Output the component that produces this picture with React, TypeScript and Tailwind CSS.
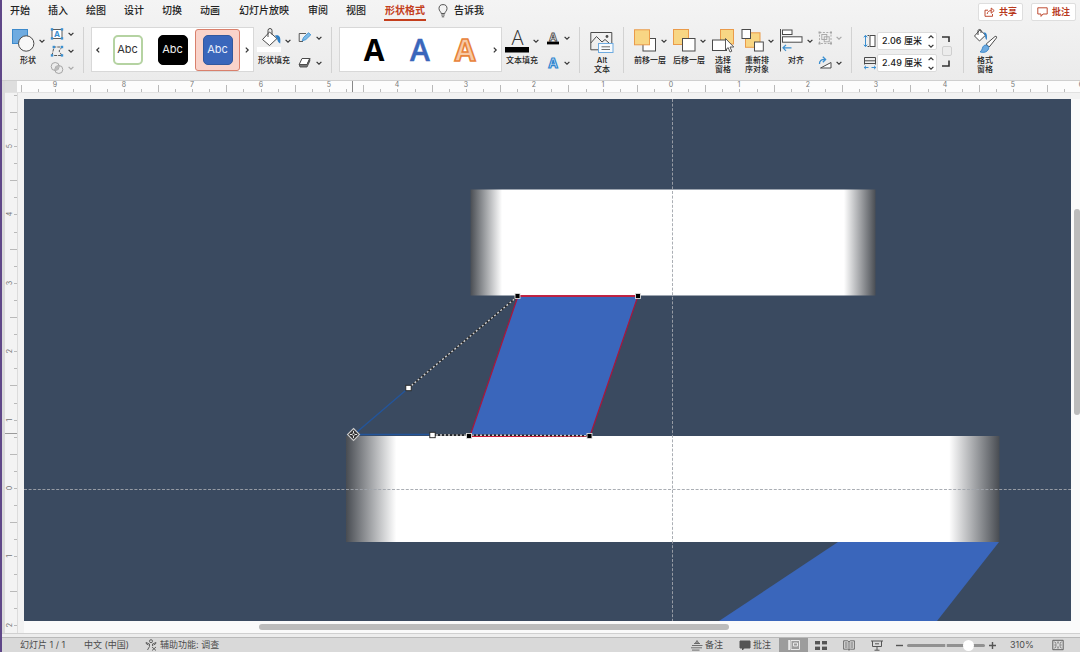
import React from "react";

const INK = "#4a4a4a";
const BLUE = "#3b8fd0";

const TABS = [
  { name: "开始", width: "w-5" },
  { name: "插入", width: "w-5" },
  { name: "绘图", width: "w-5" },
  { name: "设计", width: "w-5" },
  { name: "切换", width: "w-5" },
  { name: "动画", width: "w-5" },
  { name: "幻灯片放映", width: "w-[52px]" },
  { name: "审阅", width: "w-5" },
  { name: "视图", width: "w-5" },
  { name: "形状格式", width: "w-[42px]", active: true },
];

function Chevron({ dir = "down", muted = false }: { dir?: "down" | "up" | "left" | "right"; muted?: boolean }) {
  const d = {
    down: "M.6 1.8 L3 4.2 L5.4 1.8",
    up: "M.6 4.2 L3 1.8 L5.4 4.2",
    left: "M4.2 .6 L1.8 3 L4.2 5.4",
    right: "M1.8 .6 L4.2 3 L1.8 5.4",
  }[dir];
  return (
    <svg viewBox="0 0 6 6" className="size-[6px] shrink-0" fill="none" stroke={muted ? "#a8a8a8" : "#333"} strokeWidth="1.2" aria-hidden="true">
      <path d={d} />
    </svg>
  );
}

function Tool({ label, menu = false, children }: { label: string[]; menu?: boolean; children: React.ReactNode }) {
  return (
    <button className={`flex flex-col items-center ${menu ? "w-[34px]" : "w-6"}`}>
      <span className="flex h-[29px] items-start gap-1">
        <svg viewBox="0 0 24 28" className="h-7 w-6 shrink-0 overflow-visible" fill="none" aria-hidden="true">
          {children}
        </svg>
        {menu && (
          <span className="pt-[11px]">
            <Chevron />
          </span>
        )}
      </span>
      {label.map((line) => (
        <span key={line} className="whitespace-nowrap text-[8px] leading-[9px] font-medium">
          {line}
        </span>
      ))}
    </button>
  );
}

function SmallTool({ label, muted = false, children }: { label: string; muted?: boolean; children: React.ReactNode }) {
  return (
    <button aria-label={label} disabled={muted} className="flex h-[14px] items-center gap-[3px]">
      <svg viewBox="0 0 15 14" className="h-[14px] w-[15px] overflow-visible" fill="none" aria-hidden="true">
        {children}
      </svg>
      <Chevron muted={muted} />
    </button>
  );
}

function Group({ className = "px-[9px]", last = false, children }: { className?: string; last?: boolean; children: React.ReactNode }) {
  return (
    <div className={`flex h-[46px] shrink-0 items-start ${last ? "" : "border-r border-[#d2d2d2]"} ${className}`}>{children}</div>
  );
}

function Swatch({ tone, selected = false }: { tone: string; selected?: boolean }) {
  return (
    <button
      className={`flex h-[42px] w-[45px] items-center justify-center rounded-[3px] border ${
        selected ? "border-[#d9806c] bg-[#f9d3ca]" : "border-transparent"
      }`}
    >
      <span className={`flex size-[30px] items-center justify-center rounded-[5px] border pb-[2px] text-[11px] leading-3 ${tone}`}>Abc</span>
    </button>
  );
}

function Measure({ name, value, icon }: { name: string; value: string; icon: React.ReactNode }) {
  return (
    <div className="flex h-[18px] items-center">
      <svg viewBox="0 0 14 14" className="size-[14px]" fill="none" aria-hidden="true">
        {icon}
      </svg>
      <div className="flex h-[18px] w-[60px] items-center rounded-[2px] border border-[#dcdcdc] bg-white pl-1">
        <input aria-label={name} defaultValue={value} className="w-[46px] bg-transparent text-[9px] leading-3 font-medium text-[#222] outline-none" />
        <span className="flex flex-col gap-[3px]">
          <button aria-label={`增加${name}`} className="block">
            <Chevron dir="up" />
          </button>
          <button aria-label={`减少${name}`} className="block">
            <Chevron />
          </button>
        </span>
      </div>
    </div>
  );
}

function Bucket() {
  return (
    <>
      <path d="M5.5 12.5 L12.5 5 L20 11.5 L12.5 18.5 Z" fill="#fff" stroke={INK} strokeWidth="1" strokeLinejoin="round" />
      <path d="M11 10 V3.5 a2 2 0 0 1 4 0 V7.5" stroke={INK} strokeWidth="1" />
      <path d="M18 8.5 C22.5 7.5 24 10 23.2 16.5 C21.5 16 20.5 14 20 11.5 Z" fill="#2f7fc4" />
    </>
  );
}

function Ribbon() {
  return (
    <div className="flex h-[59px] items-start border-b border-[#cfcfcf] pt-[5px] text-[#222]">
      <Group>
        <Tool label={["形状"]} menu>
          <rect x="1.5" y="2.5" width="15" height="14" fill="#6fabe0" stroke="#3d8acb" />
          <circle cx="15.2" cy="16.5" r="7.7" fill="#f8f8f8" stroke={INK} />
        </Tool>
        <div className="ml-[5px] flex flex-col gap-[3px]">
          <SmallTool label="文本框">
            <rect x="2" y="2.5" width="10" height="9" fill="#fff" stroke={INK} strokeWidth=".9" />
            <text x="7" y="10" textAnchor="middle" fontSize="8" fontWeight="700" fill={BLUE}>A</text>
            <g fill={BLUE}>
              <rect x="0.8" y="1.2" width="2.4" height="2.4" /><rect x="10.8" y="1.2" width="2.4" height="2.4" />
              <rect x="0.8" y="10.2" width="2.4" height="2.4" /><rect x="10.8" y="10.2" width="2.4" height="2.4" />
            </g>
          </SmallTool>
          <SmallTool label="编辑形状">
            <path d="M2 11.5 L4 3 H12 L9 7 L12 11.5 Z" stroke={INK} strokeWidth=".9" strokeDasharray="3 1" />
            <g fill={BLUE}>
              <rect x="2.6" y="1.8" width="2.4" height="2.4" /><rect x="10.8" y="1.8" width="2.4" height="2.4" />
              <rect x="0.8" y="10.2" width="2.4" height="2.4" /><rect x="10.8" y="10.2" width="2.4" height="2.4" />
            </g>
          </SmallTool>
          <SmallTool label="合并形状" muted>
            <circle cx="5.2" cy="5.5" r="4" stroke="#a5a5a5" />
            <circle cx="8.8" cy="8.5" r="4" stroke="#a5a5a5" />
            <path d="M4.9 9.4 A4 4 0 0 1 9.1 4.5 A4 4 0 0 1 4.9 9.4Z" fill="#bbb" />
          </SmallTool>
        </div>
      </Group>

      <Group className="pl-[7px] pr-[9px]">
        <div className="flex h-[45px] w-[163px] items-center justify-between border border-[#d8d8d8] bg-white px-[3px]">
          <button aria-label="上一组样式"><Chevron dir="left" /></button>
          <div className="flex">
            <Swatch tone="border-2 border-[#b5d3a2] bg-white text-[#333]" />
            <Swatch tone="border-black bg-black text-[#eee]" />
            <Swatch tone="border-[#31589f] bg-[#3a66bb] text-[#e8eefb]" selected />
          </div>
          <button aria-label="下一组样式"><Chevron dir="right" /></button>
        </div>
        <div className="ml-[3px] flex gap-[7px]">
          <Tool label={["形状填充"]} menu>
            <Bucket />
            <rect x="0" y="20" width="24" height="5" fill="#fff" />
          </Tool>
          <div className="flex flex-col gap-[11px] pt-1">
            <SmallTool label="形状轮廓">
              <path d="M8 2.5 H1.2 V10.5 H5" stroke={INK} strokeWidth=".9" />
              <path d="M4.2 9.8 L5.5 6.5 L10.5 1.8 L12.8 3.8 L7.8 8.6 Z" fill="#7dbbe8" stroke={BLUE} strokeWidth=".9" />
            </SmallTool>
            <SmallTool label="形状效果">
              <path d="M4 2.5 H11.8 L9 8.5 H1.2 Z" fill="#fff" stroke={INK} strokeWidth="1" strokeLinejoin="round" />
              <path d="M1.2 8.5 L2 11 H9 L11.8 5 V2.5 L9 8.5 Z" fill="#777" stroke={INK} strokeWidth=".9" strokeLinejoin="round" />
            </SmallTool>
          </div>
        </div>
      </Group>

      <Group className="pl-[7px] pr-[9px]">
        <div className="flex h-[45px] w-[163px] items-center border border-[#d8d8d8] bg-white pr-[3px]">
          <svg
            viewBox="0 0 152 43"
            className="h-[43px] min-w-0 flex-1 font-['Open_Sans',sans-serif]"
            fontSize="30"
            textAnchor="middle"
            role="img"
            aria-label="艺术字样式"
          >
            <text x="34" y="33" fontWeight="700" fill="#000">A</text>
            <text x="80" y="33" fontWeight="600" fill="#3a66bb" stroke="#3a66bb" strokeWidth=".5">A</text>
            <text x="125" y="33" fontWeight="700" fill="#f7c9a5" stroke="#e8833a" strokeWidth="1.6">A</text>
          </svg>
          <button aria-label="更多艺术字"><Chevron dir="right" /></button>
        </div>
        <div className="ml-[3px] flex gap-[7px]">
          <Tool label={["文本填充"]} menu>
            <text x="12.5" y="18" textAnchor="middle" fontSize="20" fontWeight="300" fill="#333" className="font-['Open_Sans',sans-serif]">A</text>
            <rect x="0" y="20" width="24" height="5.5" fill="#000" />
          </Tool>
          <div className="flex flex-col gap-[11px] pt-1">
            <SmallTool label="文本轮廓">
              <text x="7" y="9.5" textAnchor="middle" fontSize="11" fontWeight="700" fill="#fff" stroke={INK} strokeWidth=".8">A</text>
              <rect x="1" y="10.6" width="12" height="2.8" fill="#000" />
            </SmallTool>
            <SmallTool label="文本效果">
              <text x="7" y="12" textAnchor="middle" fontSize="13" fontWeight="700" fill="#eaf4fc" stroke="#2f86cf" strokeWidth="1.2">A</text>
            </SmallTool>
          </div>
        </div>
      </Group>

      <Group className="pl-[10px] pr-[9px]">
        <Tool label={["Alt", "文本"]}>
          <path d="M0.8 5.5 H21.8 V16 M0.8 5.5 V22.8 H8" stroke={INK} />
          <path d="M0.8 16 L6.5 9.5 L12 15 L15 12.5 L19 16" stroke={INK} />
          <circle cx="17" cy="9.5" r="1.4" fill={INK} />
          <rect x="8.5" y="16.5" width="14.5" height="9" fill="#f6fafd" stroke="#6fabe0" />
          <path d="M11.5 19.8 H20 M11.5 22.5 H20" stroke={INK} strokeWidth=".8" />
        </Tool>
      </Group>

      <Group className="gap-[5px] px-[9px]">
        <Tool label={["前移一层"]} menu>
          <rect x="10" y="11.5" width="12.5" height="12.5" fill="#fff" stroke={INK} />
          <rect x="1.5" y="2.8" width="15" height="15" fill="#f8d684" stroke="#ea9b4a" />
        </Tool>
        <Tool label={["后移一层"]} menu>
          <rect x="1.5" y="2.5" width="15" height="15" fill="#f8d684" stroke="#ea9b4a" />
          <rect x="10.5" y="11.5" width="12.5" height="12.5" fill="#fff" stroke={INK} />
        </Tool>
        <Tool label={["选择", "窗格"]}>
          <rect x="9.5" y="2.5" width="13" height="14.5" fill="#f8d684" stroke="#ea9b4a" />
          <rect x="1.5" y="13" width="14" height="10.5" fill="#fff" stroke={INK} />
          <path d="M14.5 11.5 V23 L17.2 20.6 L19 25 L20.8 24.2 L19 20 H22.8 Z" fill="#fff" stroke={INK} strokeWidth=".9" strokeLinejoin="round" />
        </Tool>
        <Tool label={["重新排", "序对象"]} menu>
          <rect x="5.5" y="5.8" width="14.5" height="14.5" fill="#f8d684" stroke="#ea9b4a" />
          <rect x="2" y="2.5" width="8.5" height="9" fill="#fff" stroke={INK} />
          <rect x="14.5" y="15" width="8.8" height="9" fill="#fff" stroke={INK} />
        </Tool>
        <Tool label={["对齐"]} menu>
          <path d="M1.5 2 V24.5" stroke={INK} strokeWidth="1" />
          <rect x="3.5" y="3" width="9.5" height="4.5" fill="#fff" stroke={INK} />
          <rect x="3.5" y="9.8" width="19.5" height="5.4" fill="#fff" stroke={INK} />
          <path d="M12.5 20.8 H4 M7 17.8 L4 20.8 L7 23.8" stroke={BLUE} strokeWidth="1.2" />
        </Tool>
        <div className="flex flex-col gap-[11px] pt-1">
          <SmallTool label="组合" muted>
            <g stroke="#a5a5a5" strokeWidth=".9">
              <rect x="1.5" y="1.5" width="11.5" height="11" strokeDasharray="2 1.4" />
              <rect x="3.8" y="3.5" width="5" height="5" />
              <rect x="6.2" y="5.8" width="5" height="5" />
            </g>
            <g fill="#a5a5a5">
              <rect x=".5" y=".5" width="2" height="2" /><rect x="12" y=".5" width="2" height="2" />
              <rect x=".5" y="11.5" width="2" height="2" /><rect x="12" y="11.5" width="2" height="2" />
            </g>
          </SmallTool>
          <SmallTool label="旋转">
            <path d="M2.5 12 L13 6.5 V12 Z" fill="#fff" stroke={INK} strokeLinejoin="round" />
            <path d="M1.5 8 C1.2 4.8 3.5 3.2 7 3.5 M4.8 .8 L7.6 3.5 L4.8 6.2" stroke={BLUE} strokeWidth="1.3" />
          </SmallTool>
        </div>
      </Group>

      <Group className="gap-[5px] px-[11px]">
        <div className="flex flex-col gap-1 pt-[5px]">
          <Measure
            name="高度"
            value="2.06 厘米"
            icon={
              <>
                <rect x="7" y="1.5" width="5" height="11" fill="#fff" stroke={INK} />
                <path d="M2.5 1.5 V12.5 M.8 3.3 L2.5 1.3 L4.2 3.3 M.8 10.7 L2.5 12.7 L4.2 10.7" stroke={BLUE} strokeWidth="1" />
                <path d="M4.5 1.5 H6 M4.5 12.5 H6" stroke={INK} />
              </>
            }
          />
          <Measure
            name="宽度"
            value="2.49 厘米"
            icon={
              <>
                <path d="M1.5 8.5 V1.5 H12.5 V8.5 M1.5 4.8 H12.5 M1.5 7.5 H12.5" stroke={INK} />
                <path d="M1.2 11.5 H5.5 M8.5 11.5 H12.8 M3 9.8 L1.2 11.5 L3 13.2 M11 9.8 L12.8 11.5 L11 13.2" stroke={BLUE} />
              </>
            }
          />
        </div>
        <div className="flex flex-col items-center gap-[3px] pt-2">
          <svg viewBox="0 0 10 8" className="h-2 w-[10px]" fill="none" aria-hidden="true">
            <path d="M0 2 H7 V7" stroke="#333" strokeWidth="1.6" />
          </svg>
          <input type="checkbox" aria-label="锁定纵横比" className="size-[10px] appearance-none rounded-[2px] border border-[#cfcfcf] bg-[#ececec]" />
          <svg viewBox="0 0 10 8" className="h-2 w-[10px]" fill="none" aria-hidden="true">
            <path d="M0 7 H7 V1.5" stroke="#333" strokeWidth="1.6" />
          </svg>
        </div>
      </Group>

      <Group last>
        <Tool label={["格式", "窗格"]}>
          <path d="M1.5 9 L7 2.8 L12.5 8.2 L6.5 14 Z" fill="#fff" stroke={INK} strokeLinejoin="round" />
          <path d="M5 8 V3.5 a1.6 1.6 0 0 1 3 0 V6" stroke={INK} />
          <path d="M10.5 5.5 C13.5 5 14.5 7.5 13.8 13 C12.6 12.4 12.2 10.5 12 8.3 Z" fill="#2f7fc4" />
          <path d="M13.2 17 L22 9.5 C23.4 8.9 24 9.8 23.4 11 L16.2 20 Z" fill="#fff" stroke={INK} strokeLinejoin="round" />
          <path d="M7 24.8 C10 23.5 8.5 20 11.5 18.2 C14 17.5 16.5 19.8 15.5 22 C14 25.5 10 26 7 24.8 Z" fill="#6fabe0" stroke="#2f7fc4" strokeWidth=".9" />
        </Tool>
      </Group>
    </div>
  );
}

const UNIT = 68.4;

function HorizontalRuler() {
  const origin = 654;
  const quarters = Array.from({ length: 63 }, (_, i) => i - 38);
  return (
    <svg className="h-[11px] min-w-0 flex-1 bg-[#fcfcfc]" fontSize="7" fill="#777" textAnchor="middle" role="img" aria-label="水平标尺">
      {quarters.map((q) => {
        const x = Math.round(origin + (q * UNIT) / 4);
        const half = Math.abs(q % 4) === 2;
        return (
          <g key={q}>
            <rect x={x} y={half ? 4 : 8} width="1" height={half ? 7 : 3} fill="#b9b9b9" />
            {q % 4 === 0 && <text x={x} y="6">{Math.abs(q / 4)}</text>}
          </g>
        );
      })}
      <rect x="335" y="0" width="1" height="11" fill="#888" />
    </svg>
  );
}

function VerticalRuler() {
  const origin = 395;
  const quarters = Array.from({ length: 32 }, (_, i) => i - 23);
  return (
    <svg className="h-full w-3 shrink-0 bg-[#f3f3f3]" fontSize="7" fill="#777" textAnchor="middle" role="img" aria-label="垂直标尺">
      {quarters.map((q) => {
        const y = Math.round(origin + (q * UNIT) / 4);
        const half = Math.abs(q % 4) === 2;
        return (
          <g key={q}>
            <rect x={half ? 5 : 9} y={y} width={half ? 7 : 3} height="1" fill="#b9b9b9" />
            {q % 4 === 0 && <text transform={`translate(7 ${y}) rotate(-90)`}>{Math.abs(q / 4)}</text>}
          </g>
        );
      })}
      <rect x="0" y="340" width="12" height="1" fill="#999" />
    </svg>
  );
}

function Slide() {
  const anchors = [[517.5, 296], [638, 296], [469, 436], [589.5, 436]];
  const handles = [[408.5, 388], [432.5, 435]];
  return (
    <svg viewBox="24 99 1047 522" preserveAspectRatio="xMidYMid slice" className="block h-full w-full bg-[#3a4a60]" fill="none" role="img" aria-label="幻灯片">
      <defs>
        <linearGradient id="top-bar">
          <stop offset="0" stopColor="#4a4e54" />
          <stop offset=".078" stopColor="#fff" />
          <stop offset=".922" stopColor="#fff" />
          <stop offset="1" stopColor="#4a4e54" />
        </linearGradient>
        <linearGradient id="bottom-bar">
          <stop offset="0" stopColor="#484c52" />
          <stop offset=".077" stopColor="#fff" />
          <stop offset=".923" stopColor="#fff" />
          <stop offset="1" stopColor="#484c52" />
        </linearGradient>
      </defs>
      <rect x="470.5" y="189.5" width="405" height="106" fill="url(#top-bar)" />
      <rect x="346" y="436" width="653.5" height="106" fill="url(#bottom-bar)" />
      <path d="M838 542 H999 L937 621 H719 Z" fill="#3a66bb" />
      <path d="M24 489.5 H1071 M672.5 99 V621" stroke="#a0a5ac" strokeDasharray="3 1.6" strokeWidth=".9" />
      <path d="M518 296 H638 L590 436 H470 Z" fill="#3a66bb" stroke="#a5183f" strokeWidth="1.3" />
      <path d="M518 296 H638 M470 436.3 H590" stroke="#cc1f3c" strokeWidth="1.3" />
      <path d="M408.5 388 L354 434.5 H432" stroke="#23559b" strokeWidth="1.4" />
      <path d="M408.5 388 L518 296 M432 435 L590 435.6" stroke="#222" strokeWidth="1.4" />
      <path d="M408.5 388 L518 296 M432 435 L590 435.6" stroke="#cfcfcf" strokeWidth="1.4" strokeDasharray="2 2" />
      {anchors.map(([x, y]) => (
        <rect key={`${x}-${y}`} x={x - 2.5} y={y - 2.5} width="5" height="5" fill="#000" stroke="#ddd" strokeWidth=".9" />
      ))}
      {handles.map(([x, y]) => (
        <rect key={`${x}-${y}`} x={x - 2.7} y={y - 2.7} width="5.4" height="5.4" fill="#fff" stroke="#222" strokeWidth=".9" />
      ))}
      <g transform="translate(353.5 434.5)">
        <path d="M0 -6 L6 0 L0 6 L-6 0 Z" fill="#333" stroke="#ccc" strokeWidth="1.1" />
        <path d="M0 -3.6 V3.6 M-3.6 0 H3.6" stroke="#e4e4e4" strokeWidth="1" />
        <circle r="1.3" fill="#222" stroke="#e4e4e4" strokeWidth=".6" />
      </g>
    </svg>
  );
}

function StatusIcon({ children }: { children: React.ReactNode }) {
  return (
    <svg viewBox="0 0 12 12" className="size-3 shrink-0" fill="none" stroke="#555" aria-hidden="true">
      {children}
    </svg>
  );
}

function StatusBar() {
  return (
    <footer className="flex h-[15px] shrink-0 items-center border-t border-[#b9b9b9] bg-[#d9d9d9] text-[9px] leading-[14px] whitespace-nowrap text-[#4c4c4c]">
      <span className="ml-[18px] w-16">幻灯片 1 / 1</span>
      <button>中文 (中国)</button>
      <button className="ml-4 flex items-center gap-[3px]">
        <StatusIcon>
          <circle cx="6" cy="2.2" r="1.5" strokeWidth=".9" />
          <path d="M1 3.5 L4.5 5 V7.5 L2.5 11 M11 3.5 L7.5 5 V7 M1 3.5 L1.5 5 L3.5 6 M11 3.5 L10.5 5 L8.5 6 M7 8 L11 11.5 M11 8 L7 11.5" strokeWidth=".9" />
        </StatusIcon>
        辅助功能: 调查
      </button>
      <div className="ml-auto flex h-full items-center pr-4">
        <button className="flex items-center gap-[2px]">
          <StatusIcon><path d="M1 6.5 H11.5 M0 8.8 H11 M1 11.1 H8.5 M3 4.5 H9 M6 1.5 L4.5 4 H7.5 Z" strokeWidth=".8" /></StatusIcon>
          备注
        </button>
        <button className="mr-2 ml-4 flex items-center gap-[2px]">
          <StatusIcon><path d="M1 2 H11 V9 H5 L3.5 11 V9 H1 Z" fill="#555" /></StatusIcon>
          批注
        </button>
        <button aria-label="普通视图" aria-pressed="true" className="flex h-full w-[29px] items-center justify-center bg-[#9c9c9c]">
          <svg viewBox="0 0 12 12" className="size-3" fill="none" stroke="#e9e9e9" aria-hidden="true">
            <path d="M3 1.5 H11.5 V10.5 H3 Z M5.5 4 H9.5 V7 H5.5 Z" strokeWidth="1" />
            <path d="M1.2 1 V11" strokeWidth="2" />
          </svg>
        </button>
        <button aria-label="幻灯片浏览" className="ml-[7px]">
          <StatusIcon>
            <g fill="#555" stroke="none">
              <rect x="0" y="2" width="5" height="3.4" /><rect x="7" y="2" width="5" height="3.4" />
              <rect x="0" y="7.6" width="5" height="3.4" /><rect x="7" y="7.6" width="5" height="3.4" />
            </g>
          </StatusIcon>
        </button>
        <button aria-label="阅读视图" className="ml-4">
          <StatusIcon><path d="M.6 1.8 H4.6 L6 2.8 L7.4 1.8 H11.4 V10.2 H7.4 L6 11.2 L4.6 10.2 H.6 Z M6 2.8 V11 M2 4 H4.5 M2 6 H4.5 M2 8 H4.5 M7.5 4 H10 M7.5 6 H10 M7.5 8 H10" strokeWidth=".8" /></StatusIcon>
        </button>
        <button aria-label="幻灯片放映" className="ml-4">
          <StatusIcon><path d="M0 2 H12 M1.5 2 V7.5 H10.5 V2 M6 7.5 V11 M3.5 11.2 H8.5 M4 4.8 H8" strokeWidth="1" /></StatusIcon>
        </button>
        <button aria-label="缩小" className="ml-[13px]">
          <svg viewBox="0 0 7 7" className="size-[7px]" aria-hidden="true"><path d="M0 3.5 H7" stroke="#555" strokeWidth="1.4" /></svg>
        </button>
        <input
          type="range"
          aria-label="缩放"
          min={0}
          max={100}
          defaultValue={84}
          className="mx-1 h-3 w-[78px] appearance-none bg-transparent [&::-webkit-slider-runnable-track]:h-[3px] [&::-webkit-slider-runnable-track]:rounded-full [&::-webkit-slider-runnable-track]:bg-[linear-gradient(90deg,#919191_0_49%,#c8c8c8_49%_51%,#919191_51%)] [&::-webkit-slider-thumb]:-mt-[4px] [&::-webkit-slider-thumb]:size-[11px] [&::-webkit-slider-thumb]:appearance-none [&::-webkit-slider-thumb]:rounded-full [&::-webkit-slider-thumb]:bg-white"
        />
        <button aria-label="放大">
          <svg viewBox="0 0 7 7" className="size-[7px]" aria-hidden="true"><path d="M0 3.5 H7 M3.5 0 V7" stroke="#555" strokeWidth="1.4" /></svg>
        </button>
        <button className="ml-[14px] w-[42px] text-left">310%</button>
        <button aria-label="适应窗口">
          <StatusIcon><path d="M.8 1.3 H11.2 V10.7 H.8 Z M6 2.5 V4.5 M6 7.5 V9.5 M2.5 6 H4.5 M7.5 6 H9.5 M2.5 3 L4.3 4.6 M9.5 3 L7.7 4.6 M2.5 9 L4.3 7.4 M9.5 9 L7.7 7.4" strokeWidth=".9" /></StatusIcon>
        </button>
      </div>
    </footer>
  );
}

export default function App() {
  return (
    <div className="flex h-screen flex-col overflow-hidden border-l-2 border-[#5f4788] bg-[#f2f2f2] font-['Inter','Noto_Sans_CJK_SC',sans-serif]">
      <header className="shrink-0 bg-linear-to-b from-[#f4f4f4] to-[#ebebeb]">
        <div className="flex h-[22px] items-start">
          <nav className="flex gap-[18px] pl-2 text-[10px] leading-[17px] font-medium text-[#222]">
            {TABS.map((tab) => (
              <button
                key={tab.name}
                className={`mt-[2px] h-[19px] shrink-0 border-b-2 text-center whitespace-nowrap ${tab.width} ${
                  tab.active ? "border-[#c43e1c] font-bold text-[#c43e1c]" : "border-transparent"
                }`}
              >
                {tab.name}
              </button>
            ))}
          </nav>
          <button className="mt-[2px] ml-3 flex h-[17px] items-center gap-[6px] text-[10px] leading-[17px] font-medium whitespace-nowrap text-[#222]">
            <svg viewBox="0 0 10 14" className="h-[14px] w-[10px]" fill="none" stroke="#444" aria-hidden="true">
              <path d="M3.2 9.5 C3.2 7.8 1 7 1 4.6 A4 4 0 0 1 9 4.6 C9 7 6.8 7.8 6.8 9.5 Z M3.2 11 H6.8 M3.8 12.8 H6.2" strokeWidth=".9" />
            </svg>
            告诉我
          </button>
          <div className="mr-1 ml-auto flex gap-2 pt-[3px] text-[9px] leading-4 font-bold text-[#b93a1e]">
            <button className="flex h-[18px] w-[45px] items-center justify-center gap-1 rounded-[2px] border border-[#dedede] bg-white">
              <svg viewBox="0 0 11 10" className="h-[10px] w-[11px]" fill="none" stroke="currentColor" aria-hidden="true">
                <path d="M4 3.2 H1 V9.3 H8.5 V7 M3.2 7 C3.4 4.8 5 3.6 7.2 3.6 M7.2 1 L10.2 3.6 L7.2 6.2 Z" strokeWidth=".9" />
              </svg>
              共享
            </button>
            <button className="flex h-[18px] w-[45px] items-center justify-center gap-1 rounded-[2px] border border-[#dedede] bg-white">
              <svg viewBox="0 0 11 10" className="h-[10px] w-[11px]" fill="none" stroke="currentColor" aria-hidden="true">
                <path d="M.8 .8 H10.2 V7 H6 L4 9.4 V7 H.8 Z" strokeWidth=".9" />
              </svg>
              批注
            </button>
          </div>
        </div>
        <Ribbon />
      </header>

      <main className="flex min-h-0 flex-1 flex-col border-l-[3px] border-[#dadada]">
        <div className="flex h-3 shrink-0 border-b border-[#e2e2e2]">
          <div className="w-3 bg-[#dedede]" />
          <HorizontalRuler />
        </div>
        <div className="flex min-h-0 flex-1">
          <div className="border-r border-[#dcdcdc]">
            <VerticalRuler />
          </div>
          <div className="flex min-w-0 flex-1 flex-col pt-[6px] pl-[6px]">
            <div className="flex min-h-0 flex-1">
              <div id="slide" className="min-w-0 flex-1">
                <Slide />
              </div>
              <div role="scrollbar" aria-label="垂直滚动" aria-controls="slide" aria-valuenow={35} className="flex w-[9px] flex-col items-end bg-[#fafafa]">
                <div className="h-[21%]" />
                <div className="h-[39.5%] w-[6px] rounded-full bg-[#bcbcbc]" />
              </div>
            </div>
            <div role="scrollbar" aria-label="水平滚动" aria-controls="slide" aria-valuenow={40} className="flex h-3 items-center bg-[#fafafa]">
              <div className="w-[22.3%]" />
              <div className="h-[6px] w-[44.5%] rounded-full bg-[#bcbcbc]" />
            </div>
          </div>
        </div>
      </main>
      <div className="h-1 shrink-0 border-t border-[#d0d0d0] bg-[#ededed]" />
      <StatusBar />
    </div>
  );
}
